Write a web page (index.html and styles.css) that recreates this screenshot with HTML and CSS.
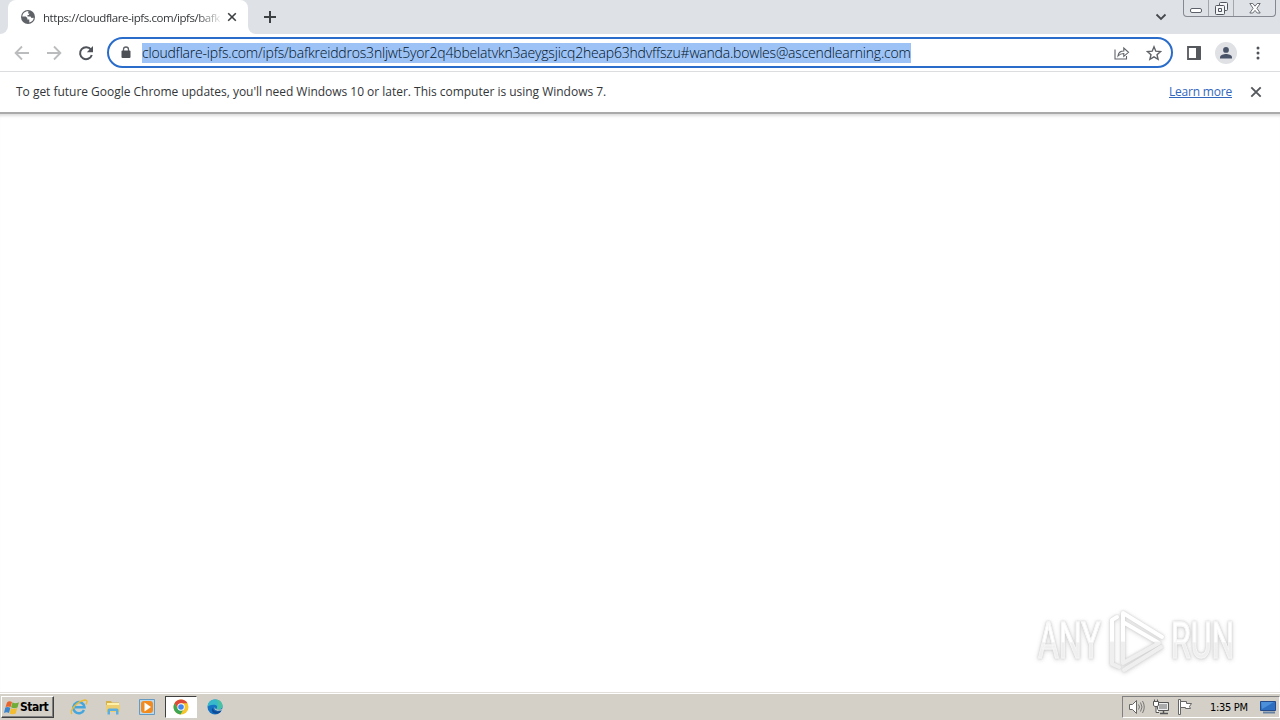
FILE: index.html
```html
<!DOCTYPE html>
<html lang="en">
<head>
  <meta charset="UTF-8" />
  <title>Browser</title>
  <link rel="stylesheet" href="styles.css">
</head>
<body>

  <!-- Tab strip -->
  <header class="tabstrip">
    <div class="edge"></div>
    <div class="tab">
      <svg class="globe" width="16" height="16" viewBox="0 0 16 16">
        <circle cx="8" cy="8" r="7" fill="#5f6368"/>
        <path d="M8.500 2.300C5 2 2.500 4.500 2.300 7.500h3.500l1.500 1.500v1.500h2v3C12 13 13.700 11 13.700 8.800l-2.200.2-1-1.500H7.500V6h1.300l.7-1.500H8z" fill="#fff"/>
      </svg>
      <span class="tab-title">https://cloudflare-ipfs.com/ipfs/bafk</span>
      <svg class="tab-close" width="10" height="10" viewBox="0 0 10 10"><path d="M1.2 1.2l7.6 7.6M8.8 1.2L1.2 8.8" stroke="#3c4043" stroke-width="1.6"/></svg>
    </div>
    <div class="strip-rest">
      <svg class="new-tab" width="12" height="12" viewBox="0 0 12 12"><path d="M6 0v12M0 6h12" stroke="#3c4043" stroke-width="2"/></svg>
      <svg class="chevron" width="12" height="8" viewBox="0 0 12 8"><path d="M1.5 1.5L6 6l4.5-4.5" fill="none" stroke="#45484d" stroke-width="1.8"/></svg>
      <div class="window-buttons">
        <span><svg width="13" height="6" viewBox="0 0 13 6"><rect x=".5" y=".5" width="11" height="4" rx="1.5" fill="#fff" stroke="#5c6068"/></svg></span>
        <span><svg width="13" height="13" viewBox="0 0 13 13"><path d="M4.500 3.500v-2q0-1 1-1h6q1 0 1 1v6q0 1-1 1h-2v3q0 1-1 1h-7q-1 0-1-1v-7q0-1 1-1z" fill="#f4f5f7" stroke="#50545c"/><path d="M4.500 3.500h4q1 0 1 1v4M3.500 6.500h3v3h-3z" fill="none" stroke="#50545c"/></svg></span>
        <span><svg width="12" height="11" viewBox="0 0 12 11"><path d="M.8.500h3L6 3.200 8.200.5h3L7.900 5.300l3.300 4.700h-3L6 7.400 3.800 10h-3l3.300-4.700z" fill="#fff" stroke="#5c6068" stroke-width=".9"/></svg></span>
      </div>
    </div>
  </header>

  <!-- Toolbar -->
  <nav class="toolbar">
    <svg class="back" width="16" height="16" viewBox="0 0 16 16"><path d="M15 8H2M8 1.500L1.600 8 8 14.500" fill="none" stroke="#babcbe" stroke-width="1.800"/></svg>
    <svg class="forward" width="16" height="16" viewBox="0 0 16 16"><path d="M1 8h13M8 1.500L14.400 8 8 14.500" fill="none" stroke="#babcbe" stroke-width="1.800"/></svg>
    <svg class="reload" width="16" height="16" viewBox="0 0 16 16"><path d="M13 4.700A6 6 0 1 0 13.800 10" fill="none" stroke="#50545a" stroke-width="2"/><path d="M15 1v6.200H8.800z" fill="#50545a"/></svg>
    <div class="omnibox">
      <svg class="lock" width="10" height="13" viewBox="0 0 10 13"><path d="M2.500 5V3.500a2.500 2.500 0 0 1 5 0V5" fill="none" stroke="#5f6368" stroke-width="1.300"/><rect x=".5" y="4.500" width="9" height="7.500" rx="1" fill="#4d5156"/></svg>
      <span class="url">cloudflare-ipfs.com/ipfs/bafkreiddros3nljwt5yor2q4bbelatvkn3aeygsjicq2heap63hdvffszu#wanda.bowles@ascendlearning.com</span>
      <svg class="share" width="16" height="14" viewBox="0 0 16 14"><path d="M1 3.500V13h11.500v-3M4 10c.4-3.500 2.600-5 5.800-5V2l4.700 4.300-4.700 4V7.500C7.200 7.500 5.500 8.300 4 10z" fill="none" stroke="#5f6368" stroke-width="1.100"/></svg>
      <svg class="star" width="16" height="16" viewBox="0 0 16 16"><path d="M8 1.800l1.800 4.400 4.800.4-3.600 3.100 1.100 4.600L8 11.800l-4.100 2.500L5 9.700 1.400 6.600l4.800-.4z" fill="none" stroke="#5f6368" stroke-width="1.400"/></svg>
    </div>
    <svg class="panel" width="14" height="14" viewBox="0 0 14 14"><path d="M1 1h12v12H1z" fill="none" stroke="#55585d" stroke-width="1.800"/><path d="M9 1h5v12H9z" fill="#55585d"/></svg>
    <svg class="avatar" width="22" height="22" viewBox="0 0 22 22"><circle cx="11" cy="11" r="11" fill="#dfe1e5"/><circle cx="11" cy="7.900" r="2.900" fill="#4a5468"/><path d="M5 16.500v-1.300c0-2.200 3.800-3.200 6-3.200s6 1 6 3.200v1.300z" fill="#4a5468"/></svg>
    <svg class="dots" width="4" height="14" viewBox="0 0 4 14"><g fill="#50545a"><circle cx="2" cy="2" r="1.500"/><circle cx="2" cy="7" r="1.500"/><circle cx="2" cy="12" r="1.500"/></g></svg>
  </nav>

  <!-- Update notice -->
  <div class="infobar">
    <p>To get future Google Chrome updates, you'll need Windows 10 or later. This computer is using Windows 7.</p>
    <a href="#">Learn more</a>
    <svg width="12" height="12" viewBox="0 0 12 12"><path d="M1.300 1.300l9.400 9.400M10.700 1.300l-9.400 9.400" stroke="#55585d" stroke-width="1.900"/></svg>
  </div>

  <!-- Page area -->
  <main class="page">
    <div class="watermark">
      <span class="any">ANY</span>
      <svg width="60" height="66" viewBox="0 0 60 66">
        <defs>
          <linearGradient id="fade" gradientUnits="userSpaceOnUse" x1="0" y1="0" x2="0" y2="66">
            <stop offset=".5" stop-color="#fff"/>
            <stop offset=".52" stop-color="#efefef"/>
          </linearGradient>
        </defs>
        <g fill="none" stroke-linejoin="round" stroke-linecap="round" stroke="url(#fade)" stroke-width="4">
          <path d="M11 9L6 12v44l7 3"/>
          <path d="M17 54V5l39 24M17 14l36 21-36 20M18 62l37-23"/>
        </g>
      </svg>
      <span class="run">RUN</span>
    </div>
  </main>

  <!-- Taskbar -->
  <footer class="taskbar">
    <button class="start">
      <svg width="16" height="15" viewBox="0 0 16 15"><path d="M3 2.500Q5 .5 8 2L6.600 7Q4 5.800 1.600 7z" fill="#e7642d"/><path d="M8.500 2.300Q11 4 15 2.300L13.500 7.500Q10 9 7.100 7.300z" fill="#70ad38"/><path d="M1.300 7.600Q3.500 6.500 6.400 7.700L5 13Q2.500 11.500 0 13z" fill="#3b85cf"/><path d="M6.900 8Q10 9.700 13.200 8.100L11.700 13.500Q8.500 15 5.500 13.500z" fill="#f2bd31"/></svg>
      Start
    </button>
    <div class="quick">
      <span><svg width="18" height="18" viewBox="0 0 18 18"><path d="M14 12A5.600 5.600 0 1 1 14.500 9.300H5" fill="none" stroke="#45a6de" stroke-width="2.500"/><path d="M2 16C-1 13 7 3 15 2c3 0 2 3 .8 4.500" fill="none" stroke="#e9bb35" stroke-width="1.300"/></svg></span>
      <span><svg width="16" height="16" viewBox="0 0 16 16"><path d="M1 2h5l1 1.500h7V13H1z" fill="#d5b14c"/><path d="M2 4h12v5H2z" fill="#fff0a8"/><path d="M1 6h14v7H1z" fill="#edcf72"/><path d="M2.500 15.500V11q0-1.500 1.500-1.500h8q1.500 0 1.500 1.500v4.500H11V12H5v3.500z" fill="#5caee0"/></svg></span>
      <span><svg width="16" height="16" viewBox="0 0 16 16"><path d="M.5.500h15v15H.5z" fill="#b9d9ef" stroke="#659ac3"/><rect x="2" y="2" width="12" height="12" rx="3" fill="#f18a1f"/><path d="M5.500 3.500L12 8l-6.500 4.500z" fill="#fff"/></svg></span>
      <span class="active"><svg width="16" height="16" viewBox="0 0 16 16"><circle cx="8" cy="8" r="7.500" fill="#f7c52d"/><path d="M1.500 4.300A7.500 7.500 0 0 1 14.500 4.300H8L5 10z" fill="#de4a38"/><path d="M1.500 4.300A7.500 7.500 0 0 0 7.500 15.500L11 9.500 5 10z" fill="#3da655"/><circle cx="8" cy="8" r="3.700" fill="#fff"/><circle cx="8" cy="8" r="2.800" fill="#4286ef"/></svg></span>
      <span><svg width="16" height="16" viewBox="0 0 16 16"><circle cx="8" cy="8" r="7.500" fill="#1673c4"/><path d="M.5 8C1 2.500 4 .5 8 .5c5 0 7.500 3.500 7.500 6.500 0 3-4 4.500-6 3 1.500-2 .5-4-2-4.200C4 5.500 1.500 6.500.5 8z" fill="#37b9cb"/><path d="M9 .6c4.500.4 6.500 3.500 6.500 6.400 0 3-4 4.500-6 3C12 7 11 3.500 9 .6z" fill="#48c1a5"/><path d="M6 9c0 3 4 4.500 8.500 2.500C12 16 6 15.500 5 12c-.4-1.500 0-2.500 1-3z" fill="#104a94"/><path d="M8 8c-.5 2 2 3.500 7 2.300l.5 1-5 .5C7.500 11 7 9.500 8 8z" fill="#d4d0c8"/></svg></span>
    </div>
    <div class="tray">
      <svg width="16" height="16" viewBox="0 0 16 16"><path d="M.5 5.500h3L7.500 1.500v13l-4-4h-3z" fill="#fff" stroke="#666"/><path d="M9.500 5.500q2 2.500 0 5M11.500 3.500q3 4.500 0 9M13.500 2q3.500 6 0 12" fill="none" stroke="#777"/></svg>
      <svg width="16" height="16" viewBox="0 0 16 16"><path d="M4.500 3.500h11v8h-11z" fill="#aaa" stroke="#555"/><path d="M5.500 4.500h9v6h-9z" fill="none" stroke="#eee"/><path d="M7 14.500h8M10.500 12v2" stroke="#555" stroke-width="1.500"/><path d="M.5 2.500h5v4l-1.500 1H2l-1.500-1zM1.500.5v2M4.500.5v2M3 7.500v6h3" fill="#fff" stroke="#555"/></svg>
      <svg width="16" height="16" viewBox="0 0 16 16"><path d="M1.500.500h2v15h-2z" fill="#fff" stroke="#666"/><path d="M3.500 2.500h6v2h5l-2 3 1 2h-5v-1h-5z" fill="#fff" stroke="#666"/></svg>
      <time>1:35 PM</time>
      <svg width="16" height="14" viewBox="0 0 16 14"><path d="M.5 1.500h15v9H.5z" fill="#2e6fc2" stroke="#254b8a"/><path d="M1 2h13L2 9z" fill="#4b90d8"/><path d="M3 12.500h12" stroke="#6682a3" stroke-width="2"/></svg>
    </div>
  </footer>

</body>
</html>
```
FILE: styles.css
```css
* {
  box-sizing: border-box;
  margin: 0;
  padding: 0;
}

body {
  width: 1280px;
  height: 720px;
  overflow: hidden;
  display: flex;
  flex-direction: column;
  background: #fff;
  color: #333639;
  font-family: "Open Sans", "Noto Sans", sans-serif;
}

svg {
  display: block;
  flex: none;
}

.tabstrip {
  display: flex;
  height: 34px;
  background: #fff;
}

.edge {
  width: 8px;
  background: #dee1e6;
  border-bottom-right-radius: 8px;
}

.tab {
  display: flex;
  align-items: center;
  width: 240px;
  padding-left: 12px;
  background: linear-gradient(#dee1e6, #dee1e6) top / 100% 8px no-repeat;
  position: relative;
}

.tab::before {
  content: "";
  position: absolute;
  inset: 0;
  background: #fff;
  border-radius: 8px 8px 0 0;
}

.tab > * {
  position: relative;
}

.tab-title {
  width: 184px;
  margin-left: 7px;
  white-space: nowrap;
  font-size: 11.5px;
  letter-spacing: -0.44px;
  -webkit-mask-image: linear-gradient(90deg, #000 154px, transparent 180px);
  mask-image: linear-gradient(90deg, #000 154px, transparent 180px);
}

.strip-rest {
  flex: 1;
  display: flex;
  background: #dee1e6;
  border-bottom-left-radius: 8px;
}

.new-tab {
  margin: 11px 0 0 16px;
}

.chevron {
  margin: 13px 16px 0 auto;
}

.window-buttons {
  display: flex;
  width: 93px;
  height: 17px;
  margin-right: 4px;
  border: 1px solid #858890;
  border-top: 0;
  border-radius: 0 0 4px 4px;
}

.window-buttons span {
  display: flex;
  align-items: center;
  justify-content: center;
  width: 24px;
}

.window-buttons span + span {
  width: 25px;
  border-left: 1px solid #a3a6ac;
}

.window-buttons span:first-child {
  padding-top: 5px;
}

.window-buttons span:last-child {
  flex: 1;
}

.toolbar {
  display: flex;
  align-items: center;
  height: 38px;
  padding: 0 20px 0 14px;
  border-bottom: 1px solid #dcdddf;
}

.forward,
.reload {
  margin-left: 16px;
}

.omnibox {
  display: flex;
  align-items: center;
  width: 1066px;
  height: 31px;
  margin-left: 13px;
  padding: 0 9px 0 12px;
  border: 2px solid #2a6cc9;
  border-radius: 16px;
}

.url {
  width: 769px;
  height: 20px;
  margin-left: 11px;
  background: #9dc2f5;
  color: #001226;
  font-size: 14px;
  font-weight: 300;
  line-height: 20px;
  letter-spacing: -0.2px;
  white-space: nowrap;
}

.share {
  margin-left: auto;
}

.star {
  margin-left: 16px;
}

.panel {
  margin-left: 14px;
}

.avatar {
  margin-left: 14px;
}

.dots {
  margin-left: auto;
}

.infobar {
  display: flex;
  align-items: center;
  height: 40px;
  padding: 0 18px 0 16px;
  font-size: 12px;
}

.infobar p,
.infobar a {
  padding-bottom: 1px;
  letter-spacing: -0.02px;
}

.infobar a {
  margin: 0 18px 0 auto;
  color: #3266bd;
  letter-spacing: -0.2px;
}

.page {
  flex: 1;
  position: relative;
  border-top: 2px solid #aaa;
  box-shadow: inset 0 4px 3px -2px #ddd;
}

.watermark {
  position: absolute;
  right: 46px;
  bottom: 18px;
  display: flex;
  align-items: center;
  font-family: "Roboto", "Liberation Sans", sans-serif;
  font-size: 50px;
  line-height: 66px;
  filter: drop-shadow(0 0 1px #ccc) drop-shadow(0 1px 2px #ddd);
}

/* letters are squeezed, so the box is wider than the space it takes */
.any,
.run {
  width: 104px;
  margin-right: -40px;
  background: linear-gradient(#fff 51%, #efefef 53%);
  -webkit-background-clip: text;
  background-clip: text;
  color: transparent;
  -webkit-text-stroke: 1px #f6f6f6;
  transform: scaleX(0.64);
  transform-origin: left;
}

.run {
  margin-right: -41px;
}

.watermark svg {
  margin: 0 5px 0 4px;
}

.taskbar {
  display: flex;
  height: 28px;
  background: #d4d0c8;
  border-top: 1px solid #e2dfda;
  box-shadow: inset 0 1px #fff;
  color: #000;
}

.start {
  display: flex;
  align-items: center;
  width: 53px;
  height: 22px;
  margin: 3px 0 0 1px;
  padding-left: 2px;
  background: #d4d0c8;
  border: 1px solid;
  border-color: #fff #404040 #404040 #fff;
  box-shadow: inset -1px -1px #808080;
  font: bold 12px "DejaVu Sans Condensed", "DejaVu Sans", sans-serif;
  letter-spacing: -0.5px;
}

.quick {
  display: flex;
  margin: 3px 0 0 9px;
}

.quick span {
  display: flex;
  align-items: center;
  justify-content: center;
  width: 32px;
  height: 22px;
  margin-right: 2px;
}

.quick .active {
  background: #fff;
  border: 1px solid;
  border-color: #404040 #fff #fff #404040;
}

.tray {
  display: flex;
  align-items: center;
  height: 22px;
  width: 158px;
  margin: 3px 0 0 auto;
  padding-left: 6px;
  border: 1px solid;
  border-color: #808080 #fff #fff #808080;
}

.tray svg + svg {
  margin-left: 8px;
}

.tray time {
  width: 40px;
  margin: 0 10px 0 17px;
  font: 11px "DejaVu Sans Condensed", sans-serif;
  letter-spacing: -0.3px;
  white-space: nowrap;
}
```
